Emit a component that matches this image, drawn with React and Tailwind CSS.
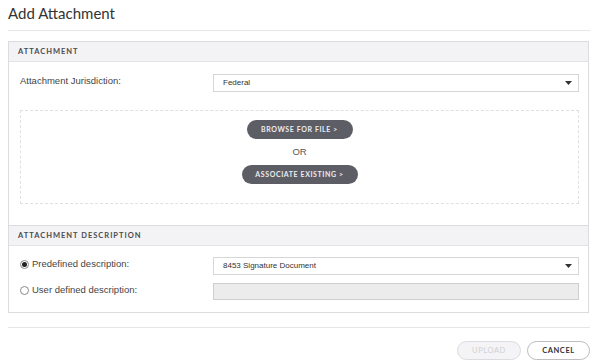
import React from 'react';

const SectionHeader = ({ children }) => (
  <div className="h-[20px] flex items-center px-[9px] bg-[#f3f3f5] border-b border-[#e3e3e6] font-['Lato'] font-bold text-[7.5px] tracking-[1px] text-[#4a4a4f]">
    {children}
  </div>
);

const Select = ({ value }) => (
  <div className="flex-1 h-[18px] border border-[#d6d6d6] bg-white flex items-center justify-between pl-[9px] pr-[6px] text-[8px] text-[#333]">
    <span>{value}</span>
    <svg width="7" height="4" viewBox="0 0 7 4">
      <path d="M0 0h7L3.5 4z" fill="#333" />
    </svg>
  </div>
);

const Radio = ({ checked }) => (
  <span className="w-[9px] h-[9px] rounded-full border border-[#8a8a8a] bg-white flex items-center justify-center mr-[3px]">
    {checked && <span className="w-[5px] h-[5px] rounded-full bg-[#222]" />}
  </span>
);

const DarkButton = ({ children, w }) => (
  <button className={`${w} h-[19px] rounded-full bg-[#5d5d66] text-[#ececf0] font-['Lato'] font-bold text-[7px] tracking-[0.6px]`}>
    {children}
  </button>
);

const App = () => {
  return (
    <div className="w-[598px] h-[363px] bg-white px-2 font-['Liberation_Sans',sans-serif] overflow-hidden">
      {/* Title */}
      <div className="h-[31px] border-b border-[#e6e6e8] pt-[2px]">
        <h1 className="font-['Lato'] text-[15px] text-[#333] leading-[22px]">Add Attachment</h1>
      </div>

      {/* Panel */}
      <div className="mt-[10px] mr-[1px] border border-[#dcdcde]">
        <SectionHeader>ATTACHMENT</SectionHeader>
        <div className="pl-[11px] pr-[9px] pt-[12px] pb-[21px]">
          <div className="flex items-start">
            <span className="w-[193px] text-[9.5px] text-[#444] leading-[14px]">Attachment Jurisdiction:</span>
            <Select value="Federal" />
          </div>
          <div className="mt-[18px] h-[94px] border border-dashed border-[#e0e0e0] flex flex-col items-center pt-[9px]">
            <DarkButton w="w-[106px]">BROWSE FOR FILE &gt;</DarkButton>
            <span className="my-[7px] text-[9.5px] text-[#555] leading-[12px]">OR</span>
            <DarkButton w="w-[116px]">ASSOCIATE EXISTING &gt;</DarkButton>
          </div>
        </div>

        <div className="border-t border-[#dcdcde]">
          <SectionHeader>ATTACHMENT DESCRIPTION</SectionHeader>
        </div>
        <div className="pl-[11px] pr-[9px] pt-[11px] pb-[12px] flex flex-col gap-[8px]">
          <div className="flex items-start">
            <div className="w-[193px] h-[14px] flex items-center text-[9.5px] text-[#444]">
              <Radio checked />
              <span>Predefined description:</span>
            </div>
            <Select value="8453 Signature Document" />
          </div>
          <div className="flex items-start">
            <div className="w-[193px] h-[14px] flex items-center text-[9.5px] text-[#444]">
              <Radio />
              <span>User defined description:</span>
            </div>
            <div className="flex-1 h-[17px] border border-[#cfcfcf] bg-[#ececec]" />
          </div>
        </div>
      </div>

      {/* Footer */}
      <div className="mt-[14px] border-t border-[#e6e6e8] pt-[13px] flex justify-end gap-[6px]">
        <button className="w-[64px] h-[19px] rounded-full border border-[#dcdcdf] bg-[#f4f4f6] text-[#cfd0d4] font-['Lato'] text-[7.5px] tracking-[0.6px]">
          UPLOAD
        </button>
        <button className="w-[63px] h-[19px] rounded-full border border-[#bdbdc2] bg-white text-[#333] font-['Lato'] font-bold text-[7.5px] tracking-[0.6px]">
          CANCEL
        </button>
      </div>
    </div>
  );
};

export default App;
